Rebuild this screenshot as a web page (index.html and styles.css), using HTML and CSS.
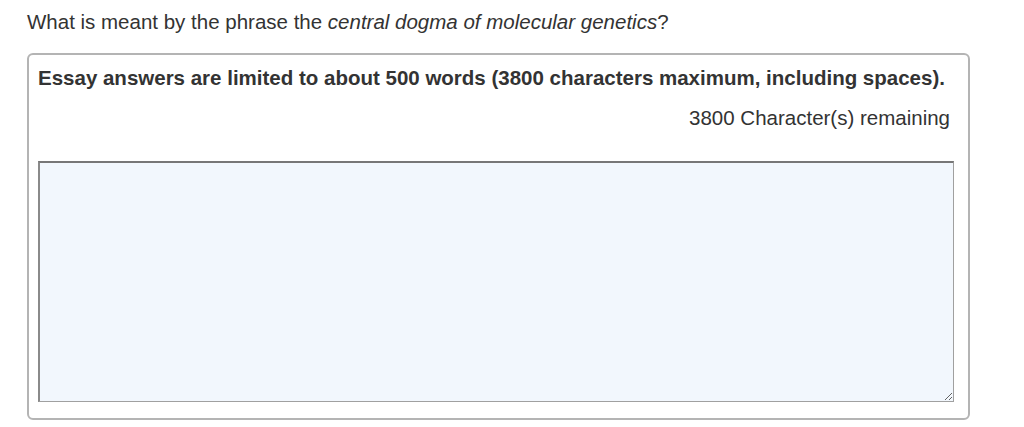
FILE: index.html
```html
<!DOCTYPE html>
<html>
<head>
<meta charset="utf-8">
<link rel="stylesheet" href="styles.css">
</head>
<body>
<div class="page">
  <p class="question">What is meant by the phrase the <em>central dogma of molecular genetics</em>?</p>
  <div class="essay">
    <p class="limit">Essay answers are limited to about 500 words (3800 characters maximum, including spaces).</p>
    <p class="remaining">3800 Character(s) remaining</p>
    <textarea class="answer"></textarea>
  </div>
</div>
</body>
</html>
```
FILE: styles.css
```css
html, body {
  margin: 0;
  padding: 0;
  background: #fff;
}
body {
  font-family: "Liberation Sans", Arial, Helvetica, sans-serif;
  color: #333;
  font-size: 20.5px;
}
.page {
  padding: 10px 54px 0 27px;
}
.question {
  margin: 0;
  line-height: 24px;
}
.essay {
  margin-top: 19px;
  border: 2px solid #b4b4b4;
  border-radius: 6px;
  padding: 11px 14px 16px 9px;
  height: 367px;
  box-sizing: border-box;
  display: flex;
  flex-direction: column;
}
.limit {
  margin: 0;
  font-weight: bold;
  line-height: 24px;
}
.remaining {
  margin: 16px 0 0;
  text-align: right;
  line-height: 24px;
  padding-right: 4px;
}
.answer {
  margin-top: 31px;
  width: 100%;
  height: 241px;
  box-sizing: border-box;
  background: #f2f7fd;
  border: 1px solid #a0a0a0;
  border-top: 2px solid #777;
  border-left: 2px solid #8a8a8a;
  resize: vertical;
  font-family: inherit;
  font-size: 16px;
}
```
